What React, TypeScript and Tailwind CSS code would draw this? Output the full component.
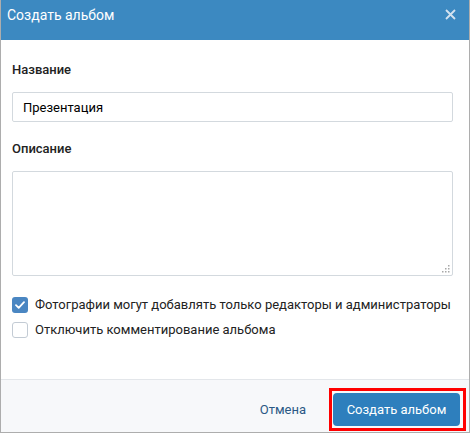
import React from 'react';

const font = { fontFamily: 'Roboto, "Noto Sans", Arial, sans-serif' };

function CheckRow({ checked, label }: { checked?: boolean; label: string }) {
  return (
    <label className="flex h-4 items-center">
      {checked ? (
        <span className="flex h-4 w-4 items-center justify-center rounded-[3px] bg-[#4a86c2]">
          <svg width="10" height="8" viewBox="0 0 10 8" fill="none">
            <path d="M1 4.2 3.7 6.8 9 1.2" stroke="#fff" strokeWidth="1.8" strokeLinecap="round" strokeLinejoin="round" />
          </svg>
        </span>
      ) : (
        <span className="h-4 w-4 rounded-[3px] border border-[#c3cbd4] bg-white" />
      )}
      <span className="ml-[7px] text-[13px] leading-4 text-[#222]">{label}</span>
    </label>
  );
}

export default function App() {
  return (
    <div className="h-[433px] w-[470px] bg-white" style={font}>
      <div className="flex h-full flex-col border-x border-b border-[#adadad]">
        <div className="relative h-10 bg-[#3c89c1] pl-[6px] pt-[7px]">
          <h3 className="text-[14px] leading-4 text-white">Создать альбом</h3>
          <button type="button" className="absolute right-[13px] top-[9px]">
            <svg width="11" height="11" viewBox="0 0 11 11" fill="none">
              <path d="M1 1 10 10M10 1 1 10" stroke="#d3e2f0" strokeWidth="1.8" />
            </svg>
          </button>
        </div>

        <div className="flex-1 pb-10 pl-[11px] pr-4 pt-[22px]">
          <div className="h-4 text-[13px] font-medium leading-4 text-[#222]">Название</div>
          <input
            className="mt-[14px] h-[30px] w-full rounded-[2px] border border-[#d3d9de] px-[10px] text-[13px] text-black outline-none"
            defaultValue="Презентация"
          />
          <div className="mt-[19px] h-4 text-[13px] font-medium leading-4 text-[#222]">Описание</div>
          <div className="relative mt-[14px]">
            <textarea className="block h-[105px] w-full resize-none rounded-[2px] border border-[#d3d9de] px-[10px] py-2 text-[13px] outline-none" />
            <svg className="pointer-events-none absolute bottom-[3px] right-[3px]" width="8" height="8" viewBox="0 0 8 8" fill="#a8a8a8">
              <rect x="6" y="0" width="1.5" height="1.5" />
              <rect x="3" y="3" width="1.5" height="1.5" />
              <rect x="6" y="3" width="1.5" height="1.5" />
              <rect x="0" y="6" width="1.5" height="1.5" />
              <rect x="3" y="6" width="1.5" height="1.5" />
              <rect x="6" y="6" width="1.5" height="1.5" />
            </svg>
          </div>
          <div className="mt-[21px] flex flex-col gap-[9px]">
            <CheckRow checked label="Фотографии могут добавлять только редакторы и администраторы" />
            <CheckRow label="Отключить комментирование альбома" />
          </div>
        </div>

        <div className="flex items-center justify-end border-t border-[#e3e6ea] bg-[#f7f8fa] pb-[6px] pr-[9px] pt-[13px]">
          <button type="button" className="mr-[27px] text-[13px] leading-4 text-[#2a5885]">Отмена</button>
          <div className="relative">
            <button type="button" className="h-[33px] w-[127px] rounded-[4px] bg-[#2e7fbd] text-[13px] leading-4 text-white">
              Создать альбом
            </button>
            <span className="pointer-events-none absolute -bottom-[5px] -left-[4px] -right-[6px] -top-[5px] border-[3px] border-[#ff0000]" />
          </div>
        </div>
      </div>
    </div>
  );
}
